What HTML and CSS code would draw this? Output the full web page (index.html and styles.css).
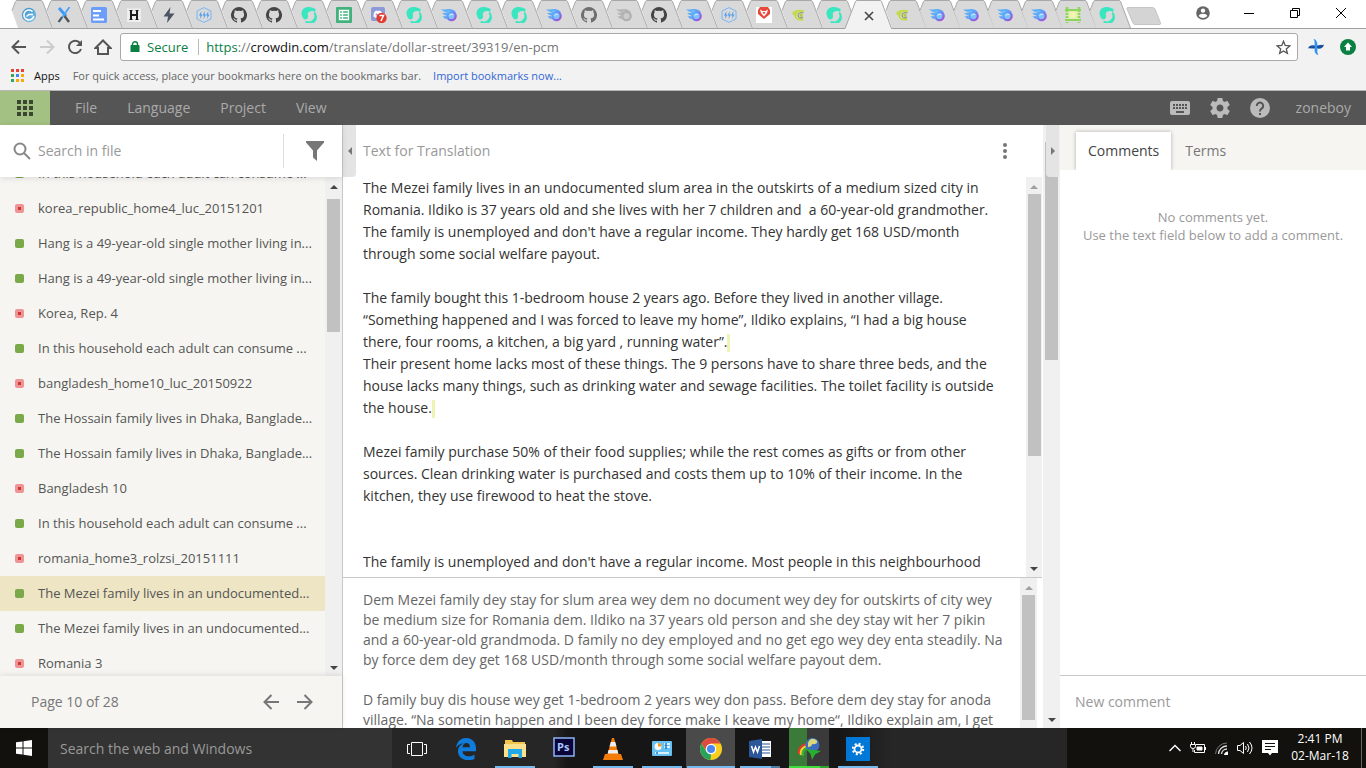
FILE: index.html
```html
<!DOCTYPE html>
<html lang="en">
<head>
<meta charset="utf-8">
<title>Crowdin – dollar-street</title>
<link rel="stylesheet" href="styles.css">
</head>
<body>
<svg class="sprites" aria-hidden="true">
  <defs>
    <linearGradient id="comet" gradientUnits="userSpaceOnUse" x1="2" y1="2" x2="15" y2="14"><stop offset=".35" stop-color="#5cb0f9"/><stop offset=".65" stop-color="#6f7df2"/><stop offset="1" stop-color="#c03fc4"/></linearGradient>
    <linearGradient id="sky" x1="0" y1="0" x2="1" y2="1"><stop offset="0" stop-color="#3b8ec8"/><stop offset="1" stop-color="#7cc3ea"/></linearGradient>
    <symbol id="tab-shape" viewBox="0 0 48 28"><path d="M7 11 10.500 1.500Q11 .5 12 .5H36Q37 .5 37.500 1.500L47.500 28H13Z" fill="#d9d9d9"/><path d="M7 10.500 10.500 1.500Q11 .5 12 .5H36Q37 .5 37.500 1.500L47.500 28" fill="none" stroke="#a8a8a8"/></symbol>
    <symbol id="tab-active" viewBox="0 0 48 29"><path d="M0 29 10.500 1.500Q11 .5 12 .5H35Q36 .5 36.500 1.500L46.500 29Z" fill="#f2f2f2"/><path d="M0 28.500 10.500 1.500Q11 .5 12 .5H35Q36 .5 36.500 1.500L46.500 28.500" fill="none" stroke="#a8a8a8"/></symbol>
    <symbol id="f-swirl" viewBox="0 0 16 16"><circle cx="8" cy="8" r="7.200" fill="url(#sky)"/><path d="M11.500 4.500A5 5 0 1 0 12.800 9" fill="none" stroke="#fff" stroke-width="1.600"/><path d="M5.500 9.500 8 7.500H12" fill="none" stroke="#fff" stroke-width="1.400"/></symbol>
    <symbol id="f-x" viewBox="0 0 16 16"><path d="M3 1 10 9" stroke="#3f9af5" stroke-width="3"/><path d="M13.500 0 3 15" stroke="#4ba3f7" stroke-width="1.800"/><path d="M8.500 9 13 15" stroke="#555" stroke-width="2.500"/><path d="M6 10 2.500 15" stroke="#555" stroke-width="2"/></symbol>
    <symbol id="f-lines" viewBox="0 0 16 16"><rect width="16" height="16" rx="1.500" fill="#6b9dfb"/><path d="M2 4H10M2 8.500H8M2 12.500H13" stroke="#fff" stroke-width="2"/></symbol>
    <symbol id="f-h" viewBox="0 0 16 16"><path d="M1 1.500H15V15H1Z" fill="#eee"/><path d="M5 3V13M11 3V13M5 8H11" stroke="#1c1c1c" stroke-width="2"/><path d="M3.500 3.500H6.500M9.500 3.500H12.500M3.500 12.500H6.500M9.500 12.500H12.500" stroke="#1c1c1c"/></symbol>
    <symbol id="f-bolt" viewBox="0 0 16 16"><path d="M9.500 0 2.500 9.500H7L6 16 13.500 6.500H8.500Z" fill="#4c5563"/></symbol>
    <symbol id="f-hex" viewBox="0 0 16 16"><path d="M8 .6 15 4V12L8 15.400 1 12V4Z" fill="none" stroke="#79b6f2"/><path d="M5.500 4 3 8.500H4.500L4 12 6.500 7.500H5ZM9 4 6.500 8.500H8L7.500 12 10 7.500H8.500ZM12.500 4 10 8.500H11.500L11 12 13.500 7.500H12Z" fill="#4d9bf0"/></symbol>
    <symbol id="f-git" viewBox="0 0 16 16"><path d="M8 0A8 8 0 0 0 5.470 15.590C5.870 15.660 6.020 15.420 6.020 15.210V13.720C3.800 14.200 3.330 12.650 3.330 12.650 2.970 11.730 2.440 11.480 2.440 11.480 1.720 10.990 2.500 11 2.500 11 3.300 11.050 3.720 11.820 3.720 11.820 4.430 13.040 5.590 12.690 6.050 12.480 6.120 11.970 6.330 11.610 6.560 11.410 4.780 11.210 2.920 10.530 2.920 7.460 2.920 6.580 3.230 5.870 3.740 5.310 3.660 5.110 3.390 4.290 3.820 3.190 3.820 3.190 4.490 2.980 6.020 4.010A7.600 7.600 0 0 1 10.020 4.010C11.550 2.970 12.220 3.190 12.220 3.190 12.650 4.290 12.380 5.110 12.300 5.310 12.810 5.870 13.120 6.580 13.120 7.460 13.120 10.540 11.250 11.210 9.460 11.410 9.750 11.660 10 12.140 10 12.890V15.210C10 15.420 10.150 15.670 10.550 15.590A8 8 0 0 0 8 0Z"/></symbol>
    <symbol id="f-steem" viewBox="0 0 16 16"><path d="M1 9C-.8 4 2.500 0 7.500 0 11 0 12.500 1.500 15 2 14 3 14 4 14.500 5L12 4C8 3.500 6 6 7 8.500 7.500 11 6 12.500 4 12.500 2.500 12 1.500 10.500 1 9Z" fill="#38e6c0"/><path d="M13 4.500C16 7 16.500 11 13 14 10 16.500 6 16 3 14.500 8 15 10 14.500 12 12.500 14 10.500 14 8 13 4.500Z" fill="#38e6c0"/><path d="M13.300 6A5.800 5.800 0 0 1 5 14.500" fill="none" stroke="#38e6c0" stroke-width="1.800"/></symbol>
    <symbol id="f-sheet" viewBox="0 0 16 16"><rect width="16" height="16" rx="1" fill="#42b27c"/><path d="M3.500 3.500H12.500V12.500H3.500ZM6.500 3.500V12.500M3.500 6.500H12.500M3.500 9.500H12.500" fill="none" stroke="#fff" stroke-width="1.300"/></symbol>
    <symbol id="f-discord" viewBox="0 0 16 16"><rect width="14" height="14" rx="2" fill="#8e9ad8"/><path d="M2.500 9.500C2.500 5 4 3 7 4 10 3 11.500 5 11.500 9.500L9 11H5Z" fill="#fff"/><circle cx="5.500" cy="7.500" r="1" fill="#8e9ad8"/><circle cx="10.500" cy="11" r="5.200" fill="#e23b32"/><path d="M8.500 8.500H12.500L10 14" fill="none" stroke="#fff" stroke-width="1.500"/></symbol>
    <symbol id="f-comet" viewBox="0 0 16 16"><g fill="url(#comet)"><path d="M0 2C4 3.500 7 1 11 2.500 13 3.200 14 4 15 5.500 12 3.800 9 3.500 7.500 4.500 4.500 5.500 2 4.500 0 2Z"/><path d="M1 5.500C3.500 7 5.500 5 8 4.500L6 8C4 8.500 2 7.500 1 5.500Z"/><path d="M1.500 9C3 9.800 4.500 9 5 8.500L6 12C4 12 2.500 11 1.500 9Z"/></g><circle cx="10.500" cy="9" r="4.200" fill="#7fc3fb" stroke="url(#comet)" stroke-width="2.200"/><path d="M8.500 8.500Q10 6.500 12 7.500" fill="none" stroke="#d8edfd"/></symbol>
    <symbol id="f-grey" viewBox="0 0 16 16"><g fill="#b5b5b5"><path d="M0 2C4 3.500 7 1 11 2.500 13 3.200 14 4 15 5.500 12 3.800 9 3.500 7.500 4.500 4.500 5.500 2 4.500 0 2Z"/><path d="M1 5.500C3.500 7 5.500 5 8 4.500L6 8C4 8.500 2 7.500 1 5.500Z"/><path d="M1.500 9C3 9.800 4.500 9 5 8.500L6 12C4 12 2.500 11 1.500 9Z"/></g><circle cx="10.500" cy="9" r="4.200" fill="#ccc" stroke="#b0b0b0" stroke-width="2.200"/></symbol>
    <symbol id="f-fox" viewBox="0 0 16 16"><path d="M0 0H16V16H0Z" fill="#fff"/><path d="M4 0H12L14 3V7L8 12 2 7V3Z" fill="#e8483a"/><path d="M4 2.500 6.500 4H9.500L12 2.500 11 6 8 9.500 5 6Z" fill="#fff"/><path d="M6.500 5 8 7.500 9.500 5Z" fill="#e8483a"/></symbol>
    <symbol id="f-lime" viewBox="0 0 16 16"><path d="M1 6C4 2.500 8 2 14 3.500L12 5C8 4 5.500 5.500 5.500 8.500 5.500 11 8 12.500 11 11L13 13C8 14.500 4.500 13 3.500 9.500Z" fill="#c5da45"/><path d="M12.500 6C9.500 5 7 6 7 8.500 7.500 11 10 11.500 12 10" fill="none" stroke="#8d9b6c" stroke-width="1.200"/><circle cx="10" cy="8.300" r="1.500" fill="#b5cc36"/></symbol>
    <symbol id="f-film" viewBox="0 0 16 16"><path d="M2 3H14V13H2Z" fill="#dff0a8"/><path d="M2 0V16M14 0V16" stroke="#8ed45f" stroke-width="2.600" stroke-dasharray="2 1"/><path d="M0 3H16M0 13H16" stroke="#8ed45f" stroke-width="1.800"/><circle cx="8" cy="8" r="3" fill="#f7f3b5"/></symbol>
    <symbol id="grid9" viewBox="0 0 16 16"><path d="M0 0H4V4H0ZM6 0H10V4H6ZM12 0H16V4H12ZM0 6H4V10H0ZM6 6H10V10H6ZM12 6H16V10H12ZM0 12H4V16H0ZM6 12H10V16H6ZM12 12H16V16H12Z"/></symbol>
  </defs>
</svg>

<nav class="tabstrip" aria-label="Browser tabs">
  <button class="tab" aria-label="Tab 1"><svg class="shape"><use href="#tab-shape"/></svg><svg class="fav"><use href="#f-swirl"/></svg></button>
  <button class="tab" aria-label="Tab 2"><svg class="shape"><use href="#tab-shape"/></svg><svg class="fav"><use href="#f-x"/></svg></button>
  <button class="tab" aria-label="Tab 3"><svg class="shape"><use href="#tab-shape"/></svg><svg class="fav"><use href="#f-lines"/></svg></button>
  <button class="tab" aria-label="Tab 4"><svg class="shape"><use href="#tab-shape"/></svg><svg class="fav"><use href="#f-h"/></svg></button>
  <button class="tab" aria-label="Tab 5"><svg class="shape"><use href="#tab-shape"/></svg><svg class="fav"><use href="#f-bolt"/></svg></button>
  <button class="tab" aria-label="Tab 6"><svg class="shape"><use href="#tab-shape"/></svg><svg class="fav"><use href="#f-hex"/></svg></button>
  <button class="tab" aria-label="Tab 7"><svg class="shape"><use href="#tab-shape"/></svg><svg class="fav"><use href="#f-git"/></svg></button>
  <button class="tab" aria-label="Tab 8"><svg class="shape"><use href="#tab-shape"/></svg><svg class="fav"><use href="#f-git"/></svg></button>
  <button class="tab" aria-label="Tab 9"><svg class="shape"><use href="#tab-shape"/></svg><svg class="fav"><use href="#f-steem"/></svg></button>
  <button class="tab" aria-label="Tab 10"><svg class="shape"><use href="#tab-shape"/></svg><svg class="fav"><use href="#f-sheet"/></svg></button>
  <button class="tab" aria-label="Tab 11"><svg class="shape"><use href="#tab-shape"/></svg><svg class="fav"><use href="#f-discord"/></svg></button>
  <button class="tab" aria-label="Tab 12"><svg class="shape"><use href="#tab-shape"/></svg><svg class="fav"><use href="#f-steem"/></svg></button>
  <button class="tab" aria-label="Tab 13"><svg class="shape"><use href="#tab-shape"/></svg><svg class="fav"><use href="#f-comet"/></svg></button>
  <button class="tab" aria-label="Tab 14"><svg class="shape"><use href="#tab-shape"/></svg><svg class="fav"><use href="#f-steem"/></svg></button>
  <button class="tab" aria-label="Tab 15"><svg class="shape"><use href="#tab-shape"/></svg><svg class="fav"><use href="#f-steem"/></svg></button>
  <button class="tab" aria-label="Tab 16"><svg class="shape"><use href="#tab-shape"/></svg><svg class="fav"><use href="#f-comet"/></svg></button>
  <button class="tab" aria-label="Tab 17"><svg class="shape"><use href="#tab-shape"/></svg><svg class="fav dim"><use href="#f-git"/></svg></button>
  <button class="tab" aria-label="Tab 18"><svg class="shape"><use href="#tab-shape"/></svg><svg class="fav"><use href="#f-grey"/></svg></button>
  <button class="tab" aria-label="Tab 19"><svg class="shape"><use href="#tab-shape"/></svg><svg class="fav"><use href="#f-git"/></svg></button>
  <button class="tab" aria-label="Tab 20"><svg class="shape"><use href="#tab-shape"/></svg><svg class="fav"><use href="#f-comet"/></svg></button>
  <button class="tab" aria-label="Tab 21"><svg class="shape"><use href="#tab-shape"/></svg><svg class="fav"><use href="#f-hex"/></svg></button>
  <button class="tab" aria-label="Tab 22"><svg class="shape"><use href="#tab-shape"/></svg><svg class="fav"><use href="#f-fox"/></svg></button>
  <button class="tab" aria-label="Tab 23"><svg class="shape"><use href="#tab-shape"/></svg><svg class="fav"><use href="#f-lime"/></svg></button>
  <button class="tab" aria-label="Tab 24"><svg class="shape"><use href="#tab-shape"/></svg><svg class="fav"><use href="#f-steem"/></svg></button>
  <button class="tab near active" aria-label="Close current tab"><svg class="shape"><use href="#tab-active"/></svg><svg class="fav" viewBox="0 0 16 16"><path d="M4 4 12 12M12 4 4 12" stroke="#444" stroke-width="1.600"/></svg></button>
  <button class="tab near" aria-label="Tab 26"><svg class="shape"><use href="#tab-shape"/></svg><svg class="fav"><use href="#f-lime"/></svg></button>
  <button class="tab near" aria-label="Tab 27"><svg class="shape"><use href="#tab-shape"/></svg><svg class="fav"><use href="#f-comet"/></svg></button>
  <button class="tab near" aria-label="Tab 28"><svg class="shape"><use href="#tab-shape"/></svg><svg class="fav"><use href="#f-comet"/></svg></button>
  <button class="tab near" aria-label="Tab 29"><svg class="shape"><use href="#tab-shape"/></svg><svg class="fav"><use href="#f-comet"/></svg></button>
  <button class="tab near" aria-label="Tab 30"><svg class="shape"><use href="#tab-shape"/></svg><svg class="fav"><use href="#f-comet"/></svg></button>
  <button class="tab near" aria-label="Tab 31"><svg class="shape"><use href="#tab-shape"/></svg><svg class="fav"><use href="#f-film"/></svg></button>
  <button class="tab near" aria-label="Tab 32"><svg class="shape"><use href="#tab-shape"/></svg><svg class="fav"><use href="#f-steem"/></svg></button>
  <button class="newtab" aria-label="New tab"><svg width="36" height="18" viewBox="0 0 36 18"><path d="M2 .5H26Q28 .5 29 2L34.500 16Q35 17.500 33.500 17.500H9Q7.500 17.500 7 16L1 2Q.5 .5 2 .5Z" fill="#d4d4d4" stroke="#c4c4c4"/></svg></button>
  <div class="window-controls">
    <button aria-label="Profile"><svg width="14" height="14" viewBox="0 0 14 14"><circle cx="7" cy="7" r="6.800" fill="#666"/><circle cx="7" cy="4.600" r="2.200" fill="#fff"/><path d="M2.700 10Q3.500 7.800 7 7.800T11.300 10Q9.500 12 7 12T2.700 10Z" fill="#fff"/></svg></button>
    <button aria-label="Minimize"><svg width="10" height="10"><path d="M0 5.500H10" stroke="#000"/></svg></button>
    <button aria-label="Restore"><svg width="10" height="10" fill="none" stroke="#000"><path d="M.5 2.500H7.500V9.500H.5ZM2.500 2.500V.5H9.500V7.500H7.500"/></svg></button>
    <button aria-label="Close"><svg width="10" height="10" stroke="#000"><path d="M0 0 10 10M10 0 0 10"/></svg></button>
  </div>
</nav>

<header class="toolbar">
  <div class="nav-buttons">
    <button aria-label="Back"><svg width="16" height="16" fill="none" stroke="#555" stroke-width="2"><path d="M15 8H2M8 1.500 1.500 8 8 14.500"/></svg></button>
    <button aria-label="Forward"><svg width="16" height="16" fill="none" stroke="#ccc" stroke-width="2"><path d="M1 8H14M8 1.500 14.500 8 8 14.500"/></svg></button>
    <button aria-label="Reload"><svg width="16" height="16" fill="none" stroke="#555" stroke-width="2"><path d="M13 4A6.200 6.200 0 1 0 14 10"/><path d="M15 1V7H9Z" fill="#555" stroke="none"/></svg></button>
    <button aria-label="Home"><svg width="18" height="16" fill="none" stroke="#555" stroke-width="2"><path d="M1.500 9 9 1.500 16.500 9H14V15H4V9Z"/></svg></button>
  </div>
  <div class="omnibox">
    <svg width="10" height="12" viewBox="0 0 10 12"><path d="M1 4H9Q9.500 4 9.500 5V11H.5V5Q.5 4 1 4Z" fill="#0b8043"/><path d="M2.500 5V3A2.500 2.200 0 0 1 7.500 3V5" fill="none" stroke="#0b8043" stroke-width="1.400"/></svg>
    <span class="secure">Secure</span>
    <span class="url"><span class="scheme">https</span>://<span class="host">crowdin.com</span>/translate/dollar-street/39319/en-pcm</span>
    <button class="star" aria-label="Bookmark this page"><svg width="15" height="15" viewBox="0 0 15 15"><path d="M7.500 1.300 9.200 5.500 13.800 5.900 10.300 8.900 11.400 13.400 7.500 11 3.600 13.400 4.700 8.900 1.200 5.900 5.800 5.500Z" fill="none" stroke="#555" stroke-width="1.300"/></svg></button>
  </div>
  <div class="extensions">
    <button aria-label="Pinwheel"><svg width="16" height="16" viewBox="0 0 16 16"><path d="M0 9.500C1 6 5 5.500 8 7 11 5.500 14 6.500 16 5.500 15 10 11 10.500 8 9 5 10.500 3 8.500 0 9.500Z" fill="#1b4f9c"/><path d="M5.500 0C9 .5 10 5 9 8 10 11 8.500 13.500 10.500 16 6.500 15.500 6 11 7 8 6 5 7.500 2.500 5.500 0Z" fill="#2f95f5"/></svg></button>
    <button aria-label="Update available"><svg width="16" height="16" viewBox="0 0 16 16"><circle cx="8" cy="8" r="8" fill="#0b8043"/><path d="M8 3.500 12 8H10V11.500H6V8H4Z" fill="#fff"/></svg></button>
  </div>
</header>

<div class="bookmarks">
  <svg width="13" height="13" viewBox="0 0 13 13"><path d="M0 0H3V3H0ZM5 0H8V3H5ZM10 0H13V3H10Z" fill="#ea4335"/><path d="M0 5H3V8H0ZM0 10H3V13H0Z" fill="#34a853"/><path d="M5 5H8V8H5Z" fill="#4285f4"/><path d="M10 5H13V8H10ZM5 10H8V13H5ZM10 10H13V13H10Z" fill="#f9a90f"/></svg>
  <a href="#apps" class="apps">Apps</a>
  <span>For quick access, place your bookmarks here on the bookmarks bar.</span>
  <a href="#import">Import bookmarks now...</a>
</div>

<header class="appbar">
  <button class="launcher" aria-label="Applications"><svg width="16" height="16" fill="#3c472f"><use href="#grid9"/></svg></button>
  <nav class="menu"><button>File</button><button>Language</button><button>Project</button><button>View</button></nav>
  <div class="tools">
    <button aria-label="Keyboard shortcuts"><svg width="20" height="14" viewBox="0 0 20 14"><rect width="20" height="14" rx="2" fill="#bbb"/><path d="M3 4H5M6 4H8M9 4H11M12 4H14M15 4H17M3 7H5M6 7H8M9 7H11M12 7H14M15 7H17M6 11H14" stroke="#555" stroke-width="2"/></svg></button>
    <button aria-label="Settings"><svg width="24" height="24" viewBox="0 0 24 24"><path fill="#bbb" d="M19.430 12.980c.040-.320.070-.640.070-.980s-.030-.660-.070-.980l2.110-1.650c.190-.150.240-.420.120-.640l-2-3.460c-.120-.220-.390-.300-.610-.220l-2.490 1c-.520-.400-1.080-.730-1.690-.980l-.380-2.650C14.460 2.180 14.250 2 14 2h-4c-.250 0-.460.180-.490.420l-.380 2.650c-.610.250-1.170.590-1.690.980l-2.490-1c-.230-.090-.490 0-.610.220l-2 3.460c-.130.220-.070.490.120.640l2.110 1.650c-.040.320-.070.650-.070.980s.030.660.070.980l-2.110 1.650c-.190.150-.240.420-.120.640l2 3.460c.120.220.390.300.610.220l2.490-1c.520.400 1.080.730 1.690.980l.380 2.650c.030.240.240.420.490.420h4c.250 0 .460-.180.490-.420l.380-2.650c.610-.250 1.170-.590 1.690-.980l2.490 1c.230.090.490 0 .610-.220l2-3.460c.120-.220.070-.490-.120-.640l-2.110-1.650zM12 15.500c-1.930 0-3.500-1.570-3.500-3.500s1.570-3.500 3.500-3.500 3.500 1.570 3.500 3.500-1.570 3.500-3.500 3.500z"/></svg></button>
    <button aria-label="Help"><svg width="20" height="20" viewBox="0 0 20 20"><circle cx="10" cy="10" r="10" fill="#bbb"/><path d="M6.800 8A3.200 3.200 0 1 1 11.800 10.400Q10 11.500 10 13.500" fill="none" stroke="#555" stroke-width="2"/><path d="M9 15H11V17H9Z" fill="#555"/></svg></button>
    <button class="user">zoneboy</button>
  </div>
</header>

<main class="workspace">
  <aside class="files">
    <div class="search">
      <svg width="18" height="18" fill="none" stroke="#888" stroke-width="2"><circle cx="7" cy="7" r="5.500"/><path d="M11 11 17 17"/></svg>
      <input type="text" placeholder="Search in file" aria-label="Search in file">
      <button class="filter" aria-label="Filter"><svg width="18" height="20" fill="#777"><path d="M0 0H18V1.500L11 9.500V20L7 16.500V9.500L0 1.500Z"/></svg></button>
    </div>
    <div class="list-area">
      <ul class="strings">
        <li class="ok"><a href="#s1">In this household each adult can consume ...</a></li>
        <li class="todo"><a href="#s2">korea_republic_home4_luc_20151201</a></li>
        <li class="ok"><a href="#s3">Hang is a 49-year-old single mother living in...</a></li>
        <li class="ok"><a href="#s4">Hang is a 49-year-old single mother living in...</a></li>
        <li class="todo"><a href="#s5">Korea, Rep. 4</a></li>
        <li class="ok"><a href="#s6">In this household each adult can consume ...</a></li>
        <li class="todo"><a href="#s7">bangladesh_home10_luc_20150922</a></li>
        <li class="ok"><a href="#s8">The Hossain family lives in Dhaka, Banglade...</a></li>
        <li class="ok"><a href="#s9">The Hossain family lives in Dhaka, Banglade...</a></li>
        <li class="todo"><a href="#s10">Bangladesh 10</a></li>
        <li class="ok"><a href="#s11">In this household each adult can consume ...</a></li>
        <li class="todo"><a href="#s12">romania_home3_rolzsi_20151111</a></li>
        <li class="ok current"><a href="#s13">The Mezei family lives in an undocumented...</a></li>
        <li class="ok"><a href="#s14">The Mezei family lives in an undocumented...</a></li>
        <li class="todo"><a href="#s15">Romania 3</a></li>
      </ul>
      <div class="scrollbar"><i class="up"></i><b class="thumb thumb-list"></b><i class="down"></i></div>
    </div>
    <div class="pager">
      <span>Page 10 of 28</span>
      <button aria-label="Previous page"><svg width="16" height="16" fill="none" stroke="#777" stroke-width="2"><path d="M16 8H2M8.500 1 1.500 8 8.500 15"/></svg></button>
      <button aria-label="Next page"><svg width="16" height="16" fill="none" stroke="#777" stroke-width="2"><path d="M0 8H14M7.500 1 14.500 8 7.500 15"/></svg></button>
    </div>
  </aside>

  <section class="editor">
    <div class="editor-head">
      <button class="collapse" aria-label="Collapse file list"><i class="tri-left"></i></button>
      <h2>Text for Translation</h2>
      <button class="more" aria-label="More"><svg width="4" height="16" fill="#777"><circle cx="2" cy="2" r="2"/><circle cx="2" cy="8" r="2"/><circle cx="2" cy="14" r="2"/></svg></button>
    </div>
    <div class="source">
      <div class="source-text">The Mezei family lives in an undocumented slum area in the outskirts of a medium sized city in
Romania. Ildiko is 37 years old and she lives with her 7 children and  a 60-year-old grandmother.
The family is unemployed and don't have a regular income. They hardly get 168 USD/month
through some social welfare payout.

The family bought this 1-bedroom house 2 years ago. Before they lived in another village.
“Something happened and I was forced to leave my home”, Ildiko explains, “I had a big house
there, four rooms, a kitchen, a big yard , running water”.<mark></mark>
Their present home lacks most of these things. The 9 persons have to share three beds, and the
house lacks many things, such as drinking water and sewage facilities. The toilet facility is outside
the house.<mark></mark>

Mezei family purchase 50% of their food supplies; while the rest comes as gifts or from other
sources. Clean drinking water is purchased and costs them up to 10% of their income. In the
kitchen, they use firewood to heat the stove.


The family is unemployed and don't have a regular income. Most people in this neighbourhood</div>
      <div class="scrollbar"><i class="up idle"></i><b class="thumb thumb-source"></b><i class="down"></i></div>
    </div>
    <div class="translation">
      <textarea aria-label="Translation" spellcheck="false">Dem Mezei family dey stay for slum area wey dem no document wey dey for outskirts of city wey
be medium size for Romania dem. Ildiko na 37 years old person and she dey stay wit her 7 pikin
and a 60-year-old grandmoda. D family no dey employed and no get ego wey dey enta steadily. Na
by force dem dey get 168 USD/month through some social welfare payout dem.

D family buy dis house wey get 1-bedroom 2 years wey don pass. Before dem dey stay for anoda
village. “Na sometin happen and I been dey force make I keave my home“, Ildiko explain am, I get</textarea>
      <div class="scrollbar"><i class="up idle"></i><b class="thumb thumb-fill"></b></div>
    </div>
  </section>

  <div class="scrollbar outer"><i class="up idle"></i><b class="thumb thumb-outer"></b><i class="down"></i>
    <button class="collapse collapse-right" aria-label="Collapse comments"><i class="tri-right"></i></button>
  </div>

  <aside class="discussion">
    <div class="side-tabs"><button class="selected">Comments</button><button>Terms</button></div>
    <p class="empty">No comments yet.<br>Use the text field below to add a comment.</p>
    <input class="new-comment" type="text" placeholder="New comment" aria-label="New comment">
  </aside>
</main>

<footer class="taskbar">
  <button class="start" aria-label="Start"><svg width="16" height="16" fill="#fff"><path d="M0 2.300 6.500 1.400V7.500H0ZM7.500 1.200 16 0V7.500H7.500ZM0 8.500H6.500V14.600L0 13.700ZM7.500 8.500H16V16L7.500 14.800Z"/></svg></button>
  <input class="os-search" type="text" placeholder="Search the web and Windows" aria-label="Search the web and Windows">
  <div class="pinned">
    <button aria-label="Task view"><svg width="20" height="14" fill="none" stroke="#fff"><path d="M4.500 .5H15.500V13.500H4.500ZM3 2.500H.5V11.500H3M17 2.500H19.500V11.500H17"/></svg></button>
    <button aria-label="Edge"><svg width="20" height="22" viewBox="0 0 20 20" preserveAspectRatio="none"><path d="M0 9C1 3 5 0 10 0 17 0 20 5 20 9V12H6.500C7 17 14 18 18.500 15V19C11 22 2 19 2 12 2 8 5 5.500 8 4.500 4 5 1.500 7 0 9ZM6.500 8.500H14C14 3 7 3.500 6.500 8.500Z" fill="#0f7bdb"/></svg></button>
    <button class="open" aria-label="File Explorer"><svg width="22" height="18" viewBox="0 0 22 18"><path d="M1 0H8L9 2H21V17H1Z" fill="#f3c44b"/><path d="M0 4H22V17H0Z" fill="#fbe08d"/><path d="M4 9H18V18H14.500V14H7.500V18H4Z" fill="#1fa9e8"/></svg></button>
    <button aria-label="Photoshop"><svg class="raised" width="22" height="20" viewBox="0 0 22 20"><rect x="1" y="1" width="20" height="18" fill="#0b0438" stroke="#8db4f5" stroke-width="1.500"/><text x="4" y="14" class="ps">Ps</text></svg></button>
    <button class="open" aria-label="VLC"><svg width="20" height="22" viewBox="0 0 20 22"><path d="M2 16H18L20 22H0Z" fill="#f57c0a"/><path d="M9 0H11L16 18Q10 21 4 18Z" fill="#f57c0a"/><path d="M7.800 4H12.200L13.500 8.500H6.500ZM5.500 12H14.500L15.300 15.500H4.700Z" fill="#eee"/></svg></button>
    <button class="open" aria-label="Control Panel"><svg width="20" height="15" viewBox="0 0 20 15"><rect width="20" height="15" rx="1" fill="#67c1f2"/><circle cx="6" cy="5.500" r="3.500" fill="#fff"/><path d="M6 5.500V2A3.500 3.500 0 0 1 9.500 5.500Z" fill="#f39b1d"/><path d="M12 3H18M12 6H18M3 12H17" stroke="#fff" stroke-width="1.500"/><path d="M14 2V8M5 11V13" stroke="#1778c8" stroke-width="1.500"/></svg></button>
    <button class="open focused" aria-label="Chrome"><svg width="22" height="22" viewBox="0 0 22 22"><circle cx="11" cy="11" r="11" fill="#f9ce1d"/><path d="M1.500 5.500A11 11 0 0 1 20.500 5.500H11L6.500 13.500Z" fill="#dd4b3e"/><path d="M1.500 5.500 6.500 14 11 16 10.500 22A11 11 0 0 1 1.500 5.500Z" fill="#27a35b"/><circle cx="11" cy="11" r="5.300" fill="#fff"/><circle cx="11" cy="11" r="4" fill="#4a87ee"/></svg></button>
    <button class="open multi" aria-label="Word"><svg width="22" height="20" viewBox="0 0 22 20"><path d="M11 2H22V18H11Z" fill="#fff"/><path d="M12 5H21M12 8H21M12 11H21M12 14H21" stroke="#2b579a" stroke-width="1.200"/><path d="M0 2 13 0V20L0 18Z" fill="#2b579a"/><path d="M2.500 7 4.500 13 6.500 8 8.500 13 10.500 7" fill="none" stroke="#fff" stroke-width="1.500"/></svg></button>
    <button class="open download" aria-label="Download Manager"><svg width="24" height="22" viewBox="0 0 24 22"><g fill="none" stroke-width="2.200"><path d="M12 6C4 6 1 11 2 16" stroke="#e3372c"/><path d="M12 8C6 8 3 12 4 17" stroke="#f2d22c"/><path d="M12 10C8 10 5 13 6 18" stroke="#35b13c"/></g><circle cx="15.500" cy="7" r="7" fill="#3c6fc0"/><path d="M11 5Q13 0 17 1 21 2 20 5 17 7 15 6 15 9 11 9Z" fill="#d9d77b"/><path d="M9 11 24 13 18 16.500 15 22 13.500 16Z" fill="#26b02c"/></svg></button>
    <button class="open" aria-label="Settings"><svg width="24" height="24" viewBox="0 0 24 24"><path d="M0 0H24V24H0Z" fill="#0078d7"/><circle cx="12" cy="12" r="3.500" fill="none" stroke="#fff" stroke-width="1.800"/><circle cx="12" cy="12" r="5.200" fill="none" stroke="#fff" stroke-width="2" stroke-dasharray="2 2.080"/></svg></button>
  </div>
  <div class="tray">
    <button aria-label="Show hidden icons"><svg width="12" height="8" fill="none" stroke="#fff" stroke-width="1.400"><path d="M.5 7 6 1.500 11.500 7"/></svg></button>
    <button aria-label="Battery"><svg width="16" height="12" fill="none" stroke="#fff"><path d="M6 2.500H14.500V10.500H4.500V8M15.500 5V8M1.500 0V2M4.500 0V2M.5 2.500H5.500V4.500Q5.500 6.500 3 6.500.5 6.500 .5 4.500ZM3 6.500V10"/><path d="M7 5H12V8H7Z" fill="#fff"/></svg></button>
    <button aria-label="Network"><svg width="13" height="13" fill="none"><path d="M.5 12A11.500 11.500 0 0 1 12 1" stroke="#777"/><path d="M3.500 12A8.500 8.500 0 0 1 12 4M6.500 12A5.500 5.500 0 0 1 12 7" stroke="#ddd" stroke-width="1.300"/><path d="M9 13A4 4 0 0 1 13 9.500V13Z" fill="#fff"/></svg></button>
    <button aria-label="Volume"><svg width="16" height="14" fill="none" stroke="#fff"><path d="M.5 4.500H3L6.500 1.500V12.500L3 9.500H.5ZM8.500 5Q10 7 8.500 9M10.500 3Q13.500 7 10.500 11M12.500 1Q17.500 7 12.500 13"/></svg></button>
    <button aria-label="Notifications"><svg width="16" height="16" viewBox="0 0 16 16"><path d="M0 0H16V13H10L8 15.500 6 13H0Z" fill="#fff"/><path d="M3 3.500H13M3 6.500H13M3 9.500H9" stroke="#12110d"/></svg></button>
    <time datetime="2018-03-02T14:41">2:41 PM<br>02-Mar-18</time>
    <button class="show-desktop" aria-label="Show desktop"></button>
  </div>
</footer>
</body>
</html>
```
FILE: styles.css
```css
*, *::before { box-sizing: border-box; }
html, body { height: 100%; }
body {
  margin: 0;
  display: flex;
  flex-direction: column;
  overflow: hidden;
  background: #fff;
  color: #333;
  font-family: "Open Sans", "Noto Sans", sans-serif;
  font-size: 14px;
}
button, input, textarea { font: inherit; color: inherit; border: 0; padding: 0; background: none; }
button { display: flex; align-items: center; justify-content: center; }
input, textarea { min-width: 0; outline: 0; }
a { color: inherit; text-decoration: none; }
svg { display: block; flex: none; }
.sprites { position: absolute; width: 0; height: 0; }

/* Browser tab strip */
.tabstrip {
  display: flex;
  flex: none;
  height: 29px;
  padding-left: 5px;
  background: #fff;
  border-bottom: 1px solid #a0a0a0;
}
.tab { position: relative; flex: none; width: 48px; height: 28px; margin-right: -13px; pointer-events: none; }
.tab.near { margin-right: -14px; }
.tab .shape { position: absolute; inset: 0; width: 48px; height: 28px; }
.tab.active { z-index: 1; height: 29px; }
.tab.active .shape { height: 29px; }
.fav { position: relative; width: 16px; height: 16px; margin-top: 2px; fill: #444; }
.fav.dim { fill: #6e6e6e; }
.newtab { align-self: flex-start; margin: 7px 0 0 9px; }
.window-controls { display: flex; margin-left: auto; padding-right: 2px; height: 26px; }
.window-controls button { width: 46px; }

/* Toolbar */
.toolbar { display: flex; flex: none; align-items: center; height: 36px; padding: 0 10px; gap: 10px; background: #f2f2f2; }
.nav-buttons { display: flex; gap: 11px; margin-right: -1px; }
.nav-buttons button { width: 17px; height: 20px; }
.omnibox {
  display: flex;
  flex: 1;
  align-items: center;
  height: 28px;
  padding: 0 6px 0 9px;
  border: 1px solid #a9a9a9;
  border-radius: 3px;
  background: #fff;
  font-size: 13px;
}
.secure { margin-left: 7px; padding-right: 10px; color: #0b8043; border-right: 1px solid #bbb; line-height: 16px; }
.url { margin-left: 7px; color: #777; }
.scheme { color: #0b8043; }
.host { color: #111; }
.star { margin-left: auto; }
.extensions { display: flex; gap: 16px; }

.bookmarks {
  display: flex;
  flex: none;
  align-items: center;
  height: 26px;
  padding: 0 11px 4px;
  background: #f2f2f2;
  border-bottom: 1px solid #b6b6b6;
  font-size: 11px;
  color: #666;
}
.bookmarks .apps { margin: 0 13px 0 10px; color: #111; }
.bookmarks span { margin-right: 12px; }
.bookmarks a:not(.apps) { color: #3367d6; }

/* Application bar */
.appbar { display: flex; flex: none; height: 34px; background: #555; color: #aaa; }
.launcher { width: 50px; background: #a3c182; }
.menu { display: flex; gap: 30px; margin-left: 25px; padding-bottom: 2px; }
.tools { display: flex; align-items: center; gap: 18px; margin-left: auto; padding-right: 15px; }
.tools .user { margin-left: 8px; padding-bottom: 2px; }

/* Workspace */
.workspace { display: grid; grid-template-columns: 343px minmax(0, 1fr) 17px 306px; flex: 1; min-height: 0; }
.files { display: flex; flex-direction: column; min-height: 0; background: #f6f5f1; border-right: 1px solid #c8c8c8; }
.search {
  display: flex;
  flex: none;
  align-items: center;
  height: 52px;
  padding-left: 13px;
  gap: 7px;
  background: #fff;
  box-shadow: 0 1px 6px rgba(0, 0, 0, .12);
  z-index: 1;
}
.search input { flex: 1; height: 34px; padding-bottom: 2px; border-right: 1px solid #ddd; }
input::placeholder { color: #999; opacity: 1; }
.filter { width: 51px; height: 34px; padding-right: 4px; }
.list-area { display: flex; flex: 1; min-height: 0; overflow: hidden; }
.strings { flex: 1; min-width: 0; margin: -21px 0 0; padding: 0; list-style: none; font-size: 13px; color: #555; }
.strings li { display: flex; align-items: center; height: 35px; padding: 0 12px 0 15px; gap: 14px; white-space: nowrap; }
.strings a { padding-bottom: 2px; }
.strings li::before { content: ""; flex: none; width: 9px; height: 9px; border-radius: 2px; background: #79a948; }
.strings .todo::before { border: 3px solid #ee9494; background: #d0342c; }
.strings .current { background: #eee5c4; }
.pager {
  display: flex;
  flex: none;
  align-items: center;
  height: 52px;
  padding: 0 29px 0 31px;
  gap: 18px;
  background: #f6f5f1;
  box-shadow: 0 -1px 6px rgba(0, 0, 0, .1);
  color: #777;
  z-index: 1;
}
.pager span { margin-right: auto; padding-bottom: 2px; }

/* Scrollbars */
.scrollbar { display: flex; flex: none; flex-direction: column; align-items: center; width: 17px; background: #f0f0f0; }
.scrollbar .up, .scrollbar .down { flex: none; width: 0; height: 0; border: 4px solid transparent; }
.scrollbar .up { margin: 4px 0 10px; border-bottom-color: #444; }
.scrollbar .down { margin: auto 0 2px; border-top-color: #444; }
.scrollbar .idle { margin-bottom: 5px; border-bottom-color: #a0a0a0; }
.thumb { width: 13px; background: #c1c1c1; }
.thumb-list { height: 133px; }
.thumb-source { height: 262px; }
.thumb-fill { flex: 1; margin-bottom: 8px; }
.thumb-outer { height: 218px; }
.outer { position: relative; }

/* Editor */
.editor { display: flex; flex-direction: column; min-width: 0; min-height: 0; }
.editor-head { display: flex; flex: none; align-items: center; height: 52px; padding-right: 36px; }
.collapse { width: 13px; height: 52px; background: #e4e4e4; border-radius: 0 0 4px 0; }
.collapse-right { position: absolute; top: 0; right: 1px; border-radius: 0 0 0 4px; }
.tri-left, .tri-right { border: 4px solid transparent; border-right: 4px solid #777; border-left-width: 0; }
.tri-right { border-width: 4px 0 4px 4px; border-color: transparent transparent transparent #777; }
h2 { margin: 0 auto 0 7px; padding-bottom: 2px; font-size: 14px; font-weight: 400; color: #999; }
.source { display: flex; flex: 1; min-height: 0; margin-right: 1px; border-bottom: 1px solid #c8c8c8; }
.source .scrollbar { width: 16px; }
.source-text { flex: 1; min-width: 0; padding-left: 20px; overflow: hidden; line-height: 22px; white-space: pre; }
mark { display: inline-block; width: 3px; height: 18px; vertical-align: middle; background: #eef4b4; }
.translation { display: flex; flex: none; height: 150px; padding-right: 6px; }
.translation textarea {
  flex: 1;
  padding: 12px 0 0 20px;
  overflow: hidden;
  resize: none;
  line-height: 20px;
  white-space: pre;
  color: #666;
}

/* Discussion */
.discussion { display: flex; flex-direction: column; min-height: 0; }
.side-tabs { display: flex; flex: none; height: 45px; padding: 7px 0 0 16px; overflow: hidden; background: #f6f5f1; color: #777; }
.side-tabs button { padding: 0 14px 2px; }
.side-tabs .selected { padding: 0 12px 2px; background: #fff; color: #444; box-shadow: 0 0 4px rgba(0, 0, 0, .3); }
.empty { flex: 1; margin: 0; padding-top: 38px; text-align: center; font-size: 13px; line-height: 18px; color: #999; }
.new-comment { flex: none; height: 53px; padding: 0 15px 2px; border-top: 1px solid #c8c8c8; }

/* Desktop taskbar */
.taskbar { display: flex; flex: none; height: 40px; background: #232323; color: #fff; }
.start { width: 48px; background: #12110d; }
.os-search { width: 344px; padding: 0 12px; background: #333; }
.pinned { display: flex; flex: 1; background: linear-gradient(90deg, #262626 24%, #161616 26%, #161616 66%, #262626 74%); }
.pinned button { width: 49px; border: 4px solid transparent; border-width: 3px 4px 2px; }
.pinned .open { background: linear-gradient(#76b9ed, #76b9ed) center bottom / 40px 2px no-repeat border-box; }
.pinned .focused { background-color: #4a4a4a; background-size: 48px 2px; }
.pinned .multi { background-image: linear-gradient(90deg, #76b9ed 31px, #4d7da3 31px); }
.pinned .download {
  background-image: linear-gradient(90deg, #3fdc3f 31px, #2fa52f 31px), linear-gradient(90deg, #3b7a38 18px, #3a3a3a 18px);
  background-size: 40px 2px, 40px 40px;
}
.raised { margin-bottom: 3px; }
.ps { font-size: 11px; font-weight: 700; fill: #a9c8ff; }
.tray { display: flex; flex: none; align-items: center; justify-content: flex-end; gap: 9px; width: 299px; background: #12110d; }
.tray time { width: 64px; margin-left: 1px; padding-bottom: 2px; text-align: center; font-size: 12px; line-height: 17px; }
.show-desktop { align-self: stretch; width: 5px; border-left: 1px solid #666; }
```
